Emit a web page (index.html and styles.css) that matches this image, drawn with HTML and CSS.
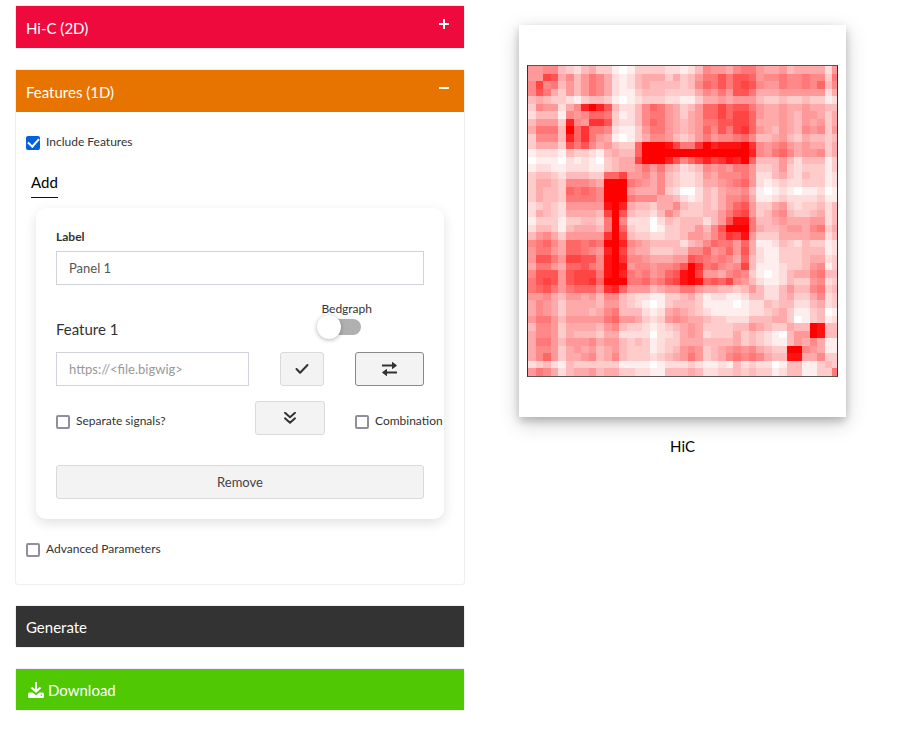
FILE: index.html
```html
<!DOCTYPE html>
<html lang="en">
<head>
<meta charset="utf-8">
<meta name="viewport" content="width=device-width, initial-scale=1">
<title>HiC</title>
<link rel="stylesheet" href="styles.css">
</head>
<body>
<main class="page">
  <form class="panels">
    <section class="panel">
      <button type="button" class="bar bar-red" aria-expanded="false">Hi-C (2D)
        <svg class="bar-icon" viewBox="0 0 10 10" aria-hidden="true"><path d="M0 5h10M5 0v10"/></svg>
      </button>
    </section>

    <section class="panel">
      <button type="button" class="bar bar-orange" aria-expanded="true">Features (1D)
        <svg class="bar-icon" viewBox="0 0 10 10" aria-hidden="true"><path d="M0 5h10"/></svg>
      </button>
      <div class="panel-body">
        <label class="check"><input type="checkbox" checked>Include Features</label>
        <a class="add" href="#add">Add</a>

        <div class="card">
          <label class="field-label" for="panel-label">Label</label>
          <input class="text-input" id="panel-label" type="text" value="Panel 1">

          <div class="feature-head">
            <h2 class="feature-title">Feature 1</h2>
            <label class="switch-group">Bedgraph
              <span class="switch"><input type="checkbox" class="switch-input"></span>
            </label>
          </div>

          <div class="row row-file">
            <input class="text-input" type="text" placeholder="https://&lt;file.bigwig&gt;" aria-label="File address">
            <button type="button" class="button" aria-label="Check">
              <svg width="14" height="12" viewBox="0 0 14 12" aria-hidden="true"><path class="stroke" d="M1.500 6l3.600 3.700L12.500 2"/></svg>
            </button>
            <button type="button" class="button button-strong" aria-label="Swap">
              <svg width="15" height="14" viewBox="0 0 15 14" aria-hidden="true"><path class="stroke" d="M.5 3.500h11M14.500 10.500h-11"/><path class="fill" d="M10 .5q0-.9.800-.3l3.700 2.800q.6.500 0 1L10.800 6.800q-.8.600-.8-.3zM5 7.500q0-.9-.8-.3L.5 10q-.6.500 0 1l3.700 2.800q.8.600.8-.3z"/></svg>
            </button>
          </div>

          <div class="row row-options">
            <label class="check"><input type="checkbox">Separate signals?</label>
            <button type="button" class="button" aria-label="More options">
              <svg width="12" height="12" viewBox="0 0 12 12" aria-hidden="true"><path class="stroke" d="M1 .8l5 4.400 5-4.400M1 6.300l5 4.400 5-4.400"/></svg>
            </button>
            <label class="check"><input type="checkbox">Combination</label>
          </div>

          <button type="button" class="button button-wide">Remove</button>
        </div>

        <label class="check"><input type="checkbox">Advanced Parameters</label>
      </div>
    </section>

    <section class="panel"><button type="button" class="bar bar-dark">Generate</button></section>

    <section class="panel">
      <button type="button" class="bar bar-green">
        <svg class="download-icon" width="16" height="16" viewBox="0 0 16 16" aria-hidden="true"><path d="M7 0h2v7.200l2.800-2.500 1.400 1.500L8 11 2.800 6.200l1.400-1.500L7 7.200z"/><path fill-rule="evenodd" d="M1.500 10.500h3L8 13.300l3.500-2.800h3A1.500 1.500 0 0 1 16 12v2.500a1.500 1.500 0 0 1-1.500 1.500h-13A1.500 1.500 0 0 1 0 14.500V12a1.500 1.500 0 0 1 1.500-1.500zM12.800 12.800v1.200h1.200v-1.200z"/></svg>
        Download
      </button>
    </section>
  </form>

  <figure class="result">
    <div class="plot">
      <div class="frame"><canvas class="heatmap" id="heatmap" width="41" height="41" role="img" aria-label="HiC contact map"></canvas></div>
    </div>
    <figcaption class="caption">HiC</figcaption>
  </figure>
</main>
<script src="heatmap.js"></script>
</body>
</html>
```
FILE: styles.css
```css
* { box-sizing: border-box; }

body {
  margin: 0;
  background: #fff;
  color: #333;
  font-family: Lato, "Liberation Sans", sans-serif;
  font-size: 12px;
  line-height: 20px;
}

button, input { font: inherit; color: inherit; }

.page {
  display: grid;
  grid-template-columns: 10fr 9fr;
  gap: 15px;
  padding: 5px 18px 20px 15px;
  align-items: start;
}

.panels { display: flex; flex-direction: column; gap: 20px; min-width: 0; }
.panel { border: 1px solid #eee; border-radius: 3px; }

.bar {
  display: flex;
  align-items: center;
  width: 100%;
  min-height: 42px;
  padding: 1px 15px 0 10px;
  border: 0;
  color: #fff;
  font-size: 15px;
  text-align: left;
}
.bar-red { background: #ef0a3e; }
.bar-orange { background: #e87400; }
.bar-dark, .bar-green { min-height: 41px; }
.bar-dark { background: #333; }
.bar-green { background: #51c804; gap: 4px; padding-left: 12px; }
.bar-icon {
  width: 10px;
  height: 10px;
  margin: 0 0 7px auto;
  stroke: #fff;
  stroke-width: 2;
}
.download-icon { fill: #fff; }

.panel-body { padding: 20px 20px 25px; }
.panel-body > .check { margin-left: -10px; }

.check { display: flex; align-items: center; gap: 6px; white-space: nowrap; }
.check input {
  display: grid;
  place-items: center;
  appearance: none;
  flex: none;
  width: 14px;
  height: 14px;
  margin: 2px 0 0;
  border: 2px solid #8f8f9d;
  border-radius: 2px;
  background: #fff;
}
.check input:checked { border-color: #0060df; background: #0060df; }
.check input:checked::after {
  content: "";
  width: 5px;
  height: 9px;
  margin-top: -3px;
  border: solid #fff;
  border-width: 0 2px 2px 0;
  transform: rotate(42deg);
}

.add {
  display: block;
  width: fit-content;
  margin: 20px 0 10px -5px;
  padding-bottom: 4px;
  border-bottom: 1px solid #111;
  color: #000;
  font-size: 15px;
  line-height: 21px;
  text-decoration: none;
}

.card {
  margin-bottom: 20px;
  padding: 20px;
  border-radius: 10px;
  box-shadow: 0 4px 12px rgba(0, 0, 0, .12);
}
.field-label { display: block; margin-bottom: 5px; font-weight: 700; line-height: 18px; }

.text-input {
  display: block;
  width: 100%;
  min-width: 0;
  height: 34px;
  padding: 0 12px;
  border: 1px solid #d0d3dc;
  background: #fff;
  color: #555;
  font-size: 13px;
}
.text-input::placeholder { color: #999; opacity: 1; }

.feature-head {
  display: flex;
  align-items: flex-end;
  justify-content: space-between;
  margin: 18px 0 13px;
  padding-right: 52px;
}
.feature-title { margin: 0; font-size: 15px; font-weight: 400; line-height: 20px; }
.switch-group { line-height: 12px; }
.switch { display: flex; align-items: center; height: 24px; }
.switch-input {
  position: relative;
  appearance: none;
  width: 40px;
  height: 16px;
  margin: 0;
  border-radius: 8px;
  background: #b0b0b0;
}
.switch-input::before {
  content: "";
  position: absolute;
  top: -4px;
  left: -4px;
  width: 24px;
  height: 24px;
  border-radius: 50%;
  background: #fff;
  box-shadow: 0 1px 4px rgba(0, 0, 0, .3);
}
.switch-input:checked::before { left: 20px; }

.row { display: grid; align-items: center; gap: 30px; }
.row-file { grid-template-columns: 1fr 44px 69px; gap: 31px; }
.row-options { grid-template-columns: 1fr 70px 69px; margin: 15px 0 30px; }
.row-options .check { padding-top: 6px; }

.button {
  display: flex;
  align-items: center;
  justify-content: center;
  height: 34px;
  padding: 0;
  border: 1px solid #dadada;
  border-radius: 3px;
  background: #f3f3f3;
  color: #444;
  font-size: 13px;
}
.button-strong { border-color: #888; }
.button-wide { width: 100%; }
.stroke { fill: none; stroke: #333; stroke-width: 2; stroke-linecap: round; stroke-linejoin: round; }
.fill { fill: #333; }

.result { margin: 20px 0 0; padding: 0 39px; }
.plot {
  padding: 40px 8px;
  background: #fff;
  box-shadow: 0 4px 8px rgba(0, 0, 0, .2), 0 6px 20px rgba(0, 0, 0, .19);
}
.frame {
  aspect-ratio: 311 / 312;
  overflow: hidden;
  border: 1px solid #333;
  border-top-color: #555;
  border-bottom-color: #555;
}
.heatmap {
  display: block;
  width: 101%;
  height: 100%;
  image-rendering: pixelated;
}
.caption { margin-top: 19px; color: #000; font-size: 15px; text-align: center; }
```
FILE: heatmap.js
```js
// Upper triangle of the symmetric contact matrix: row i starts at column i.
// Each hex digit is an intensity from 0 (white) to f (red).
// Rows are split before columns 20 and 30 for reading.
const rows = [
  "66774324533101333322 1247665788 65564555526",
  "6ba5746875212455535 34688a8aa9 67787787738",
  "784646875212454444 34798a8aba 76687787947",
  "53646875211344433 3357686aa8 55566666625",
  "3213443101233322 1135565666 43343343312",
  "57dfda422479865 34699b9aa8 65565565544",
  "67998312478865 35699b9bb9 65565466535",
  "6cca322479865 45688aabb9 55565465635",
  "887211368865 45697a8bc9 65465476736",
  "65101357764 3468677897 44564354434",
  "64339fffeb 88cfdeeefc 76786565535",
  "5449fffff fffffffffd 76897566735",
  "55bfffda 79bdbcedf9 44464244413",
  "5686854 2347676886 33463233313",
  "675743 2236577786 22453243312",
  "65743 2235567896 21232233312",
  "5732 0024356674 10121011201",
  "554 2124357785 11232222311",
  "57 43343579a6 33563233424",
  "5 3334468ab6 34674334524",
  "444246aee8 44565556624",
  "4647afff8 54456657835",
  "6579cbe6 33355556624",
  "7988695 11243243312",
  "6796a5 21133344412",
  "87594 21133345523",
  "67b4 11123346713",
  "873 10124557844",
  "64 21124336723",
  "6 42246447834",
  "42245335723",
  "4344224523",
  "453113401",
  "53013412",
  "544fe44",
  "66fe44",
  "57511",
  "6511",
  "733",
  "43",
  "8"
].map(row => row.replaceAll(" ", ""));

const context = document.getElementById("heatmap").getContext("2d");
rows.forEach((row, i) => {
  [...row].forEach((digit, offset) => {
    const j = i + offset;
    const level = 255 - 17 * parseInt(digit, 16);
    context.fillStyle = `rgb(255, ${level}, ${level})`;
    context.fillRect(j, i, 1, 1);
    context.fillRect(i, j, 1, 1);
  });
});
```
